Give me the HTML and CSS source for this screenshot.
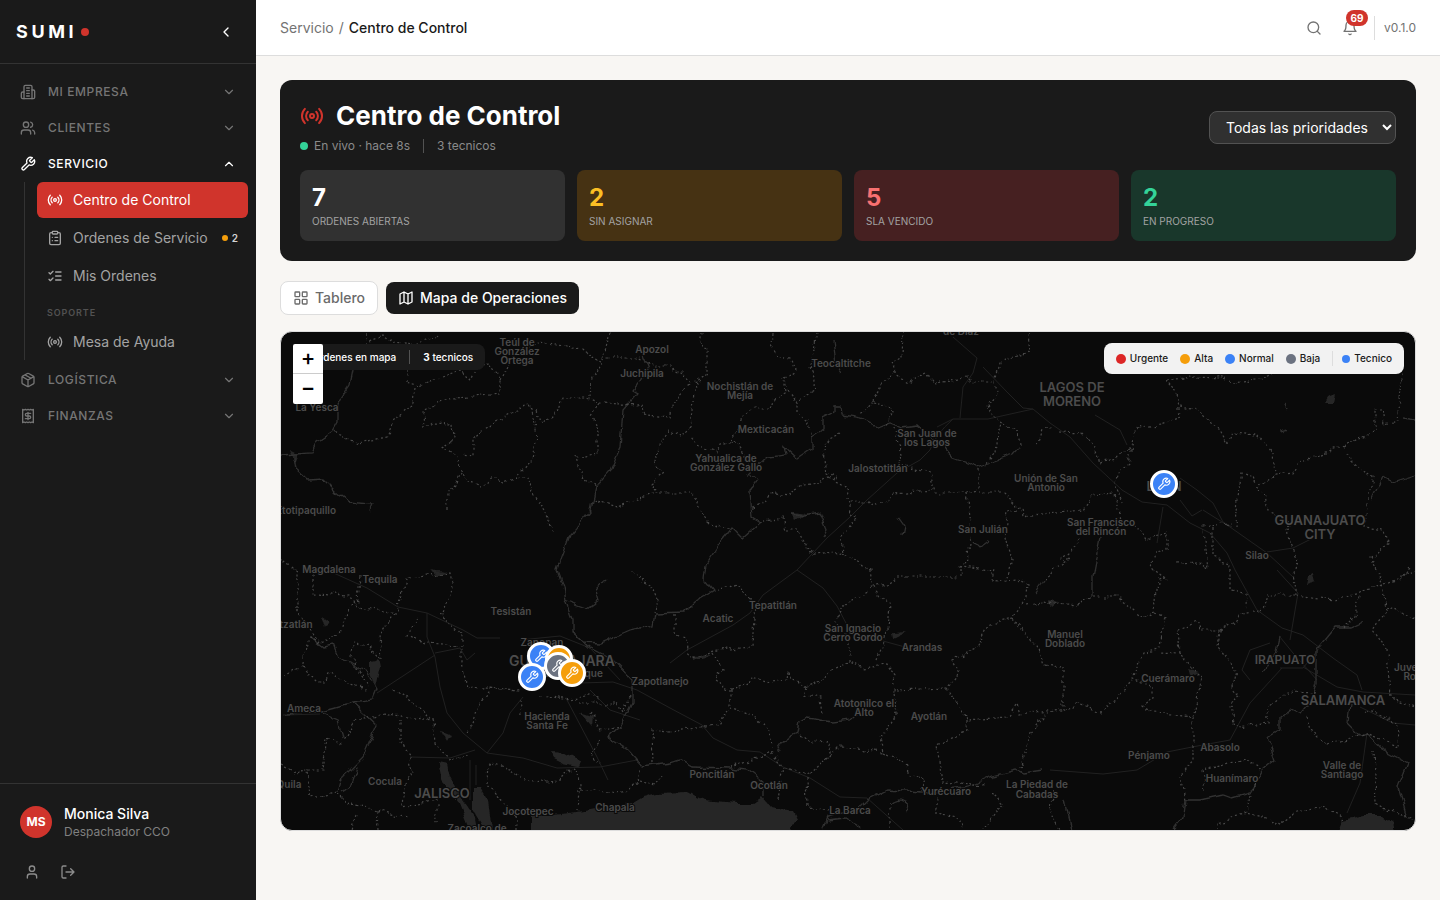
FILE: index.html
```html
<!DOCTYPE html>
<html lang="es">
<head>
  <meta charset="UTF-8" />
  <meta name="viewport" content="width=device-width, initial-scale=1.0"/>
  <title>Centro de Control</title>
  <link rel="stylesheet" href="styles.css">
</head>
<body>
  <!-- icon sprite -->
  <svg class="sprite" aria-hidden="true">
    <symbol id="i-building" viewBox="0 0 24 24"><path d="M6 22V4a2 2 0 0 1 2-2h8a2 2 0 0 1 2 2v18Z"/><path d="M6 12H4a2 2 0 0 0-2 2v6a2 2 0 0 0 2 2h2M18 9h2a2 2 0 0 1 2 2v9a2 2 0 0 1-2 2h-2M10 6h4M10 10h4M10 14h4M10 18h4"/></symbol>
    <symbol id="i-users" viewBox="0 0 24 24"><path d="M16 21v-2a4 4 0 0 0-4-4H6a4 4 0 0 0-4 4v2"/><circle cx="9" cy="7" r="4"/><path d="M22 21v-2a4 4 0 0 0-3-3.87M16 3.13a4 4 0 0 1 0 7.75"/></symbol>
    <symbol id="i-wrench" viewBox="0 0 24 24"><path d="M14.7 6.3a1 1 0 0 0 0 1.4l1.6 1.6a1 1 0 0 0 1.4 0l3.77-3.77a6 6 0 0 1-7.94 7.94l-6.91 6.91a2.12 2.12 0 0 1-3-3l6.91-6.91a6 6 0 0 1 7.94-7.94l-3.76 3.76z"/></symbol>
    <symbol id="i-radio" viewBox="0 0 24 24"><path d="M4.9 19.1C1 15.2 1 8.8 4.9 4.9M7.8 16.2c-2.3-2.3-2.3-6.1 0-8.5"/><circle cx="12" cy="12" r="2"/><path d="M16.2 7.8c2.3 2.3 2.3 6.1 0 8.5M19.1 4.9C23 8.8 23 15.1 19.1 19"/></symbol>
    <symbol id="i-clipboard" viewBox="0 0 24 24"><rect x="8" y="2" width="8" height="4" rx="1"/><path d="M16 4h2a2 2 0 0 1 2 2v14a2 2 0 0 1-2 2H6a2 2 0 0 1-2-2V6a2 2 0 0 1 2-2h2M12 11h4M12 16h4M8 11h.01M8 16h.01"/></symbol>
    <symbol id="i-checks" viewBox="0 0 24 24"><path d="m3 17 2 2 4-4M3 7l2 2 4-4M13 6h8M13 12h8M13 18h8"/></symbol>
    <symbol id="i-package" viewBox="0 0 24 24"><path d="m7.5 4.27 9 5.15M21 8a2 2 0 0 0-1-1.73l-7-4a2 2 0 0 0-2 0l-7 4A2 2 0 0 0 3 8v8a2 2 0 0 0 1 1.73l7 4a2 2 0 0 0 2 0l7-4A2 2 0 0 0 21 16ZM3.3 7l8.7 5 8.7-5M12 22V12"/></symbol>
    <symbol id="i-receipt" viewBox="0 0 24 24"><path d="M4 2v20l2-1 2 1 2-1 2 1 2-1 2 1 2-1 2 1V2l-2 1-2-1-2 1-2-1-2 1-2-1-2 1Z"/><path d="M16 8h-6a2 2 0 1 0 0 4h4a2 2 0 1 1 0 4H8M12 17.5v-11"/></symbol>
    <symbol id="i-down" viewBox="0 0 24 24"><path d="m6 9 6 6 6-6"/></symbol>
    <symbol id="i-up" viewBox="0 0 24 24"><path d="m18 15-6-6-6 6"/></symbol>
    <symbol id="i-left" viewBox="0 0 24 24"><path d="m15 18-6-6 6-6"/></symbol>
    <symbol id="i-user" viewBox="0 0 24 24"><path d="M19 21v-2a4 4 0 0 0-4-4H9a4 4 0 0 0-4 4v2"/><circle cx="12" cy="7" r="4"/></symbol>
    <symbol id="i-logout" viewBox="0 0 24 24"><path d="M9 21H5a2 2 0 0 1-2-2V5a2 2 0 0 1 2-2h4M16 17l5-5-5-5M21 12H9"/></symbol>
    <symbol id="i-search" viewBox="0 0 24 24"><circle cx="11" cy="11" r="8"/><path d="m21 21-4.3-4.3"/></symbol>
    <symbol id="i-bell" viewBox="0 0 24 24"><path d="M6 8a6 6 0 0 1 12 0c0 7 3 9 3 9H3s3-2 3-9M10.3 21a1.94 1.94 0 0 0 3.4 0"/></symbol>
    <symbol id="i-grid" viewBox="0 0 24 24"><rect x="3" y="3" width="7" height="7" rx="1"/><rect x="14" y="3" width="7" height="7" rx="1"/><rect x="14" y="14" width="7" height="7" rx="1"/><rect x="3" y="14" width="7" height="7" rx="1"/></symbol>
    <symbol id="i-map" viewBox="0 0 24 24"><path d="m3 6 6-3 6 3 6-3v15l-6 3-6-3-6 3ZM9 3v15M15 6v15"/></symbol>
  </svg>

  <div class="app">
    <aside class="sidebar">
      <div class="brand">
        <a href="#" class="logo">SUMI</a>
        <span class="logo-dot"></span>
        <button class="collapse" aria-label="Contraer menú"><svg class="icon"><use href="#i-left"/></svg></button>
      </div>

      <nav class="nav">
        <button class="nav-group"><svg class="icon"><use href="#i-building"/></svg><span>Mi empresa</span><svg class="icon chevron"><use href="#i-down"/></svg></button>
        <button class="nav-group"><svg class="icon"><use href="#i-users"/></svg><span>Clientes</span><svg class="icon chevron"><use href="#i-down"/></svg></button>
        <button class="nav-group open"><svg class="icon"><use href="#i-wrench"/></svg><span>Servicio</span><svg class="icon chevron"><use href="#i-up"/></svg></button>
        <div class="subnav">
          <a href="#" class="nav-item active"><svg class="icon"><use href="#i-radio"/></svg>Centro de Control</a>
          <a href="#" class="nav-item"><svg class="icon"><use href="#i-clipboard"/></svg>Ordenes de Servicio<span class="nav-count">2</span></a>
          <a href="#" class="nav-item"><svg class="icon"><use href="#i-checks"/></svg>Mis Ordenes</a>
          <div class="nav-label">Soporte</div>
          <a href="#" class="nav-item"><svg class="icon"><use href="#i-radio"/></svg>Mesa de Ayuda</a>
        </div>
        <button class="nav-group"><svg class="icon"><use href="#i-package"/></svg><span>Logística</span><svg class="icon chevron"><use href="#i-down"/></svg></button>
        <button class="nav-group"><svg class="icon"><use href="#i-receipt"/></svg><span>Finanzas</span><svg class="icon chevron"><use href="#i-down"/></svg></button>
      </nav>

      <div class="account">
        <div class="account-user">
          <div class="avatar">MS</div>
          <div>
            <div class="account-name">Monica Silva</div>
            <div class="account-role">Despachador CCO</div>
          </div>
        </div>
        <div class="account-actions">
          <button aria-label="Perfil"><svg class="icon"><use href="#i-user"/></svg></button>
          <button aria-label="Cerrar sesión"><svg class="icon"><use href="#i-logout"/></svg></button>
        </div>
      </div>
    </aside>

    <div class="main">
      <header class="topbar">
        <div class="breadcrumb"><a href="#">Servicio</a><span>/</span><strong>Centro de Control</strong></div>
        <div class="topbar-actions">
          <button aria-label="Buscar"><svg class="icon"><use href="#i-search"/></svg></button>
          <button aria-label="Notificaciones"><svg class="icon"><use href="#i-bell"/></svg><span class="badge">69</span></button>
          <span class="version">v0.1.0</span>
        </div>
      </header>

      <main class="content">
        <section class="hero">
          <div class="hero-head">
            <div>
              <div class="hero-title"><svg class="icon"><use href="#i-radio"/></svg><h1>Centro de Control</h1></div>
              <div class="hero-status"><span class="live">En vivo · hace 8s</span><span class="divider"></span><span>3 tecnicos</span></div>
            </div>
            <select class="priority" aria-label="Prioridad">
              <option>Todas las prioridades</option>
              <option>Urgente</option>
              <option>Alta</option>
              <option>Normal</option>
              <option>Baja</option>
            </select>
          </div>
          <div class="stats">
            <div class="stat"><div class="stat-value">7</div><div class="stat-label">Ordenes abiertas</div></div>
            <div class="stat amber"><div class="stat-value">2</div><div class="stat-label">Sin asignar</div></div>
            <div class="stat red"><div class="stat-value">5</div><div class="stat-label">SLA vencido</div></div>
            <div class="stat green"><div class="stat-value">2</div><div class="stat-label">En progreso</div></div>
          </div>
        </section>

        <div class="tabs">
          <button class="tab"><svg class="icon"><use href="#i-grid"/></svg>Tablero</button>
          <button class="tab selected"><svg class="icon"><use href="#i-map"/></svg>Mapa de Operaciones</button>
        </div>

        <section class="map">
          <svg class="map-canvas" viewBox="281 332 1134 498" preserveAspectRatio="xMinYMin slice">
            <defs>
              <filter id="rough" filterUnits="userSpaceOnUse" x="271" y="322" width="1154" height="518">
                <feTurbulence type="fractalNoise" baseFrequency="0.1" numOctaves="1" seed="4"/>
                <feDisplacementMap in="SourceGraphic" scale="9" xChannelSelector="R" yChannelSelector="G"/>
              </filter>
            </defs>

            <!-- lakes -->
            <g class="water" filter="url(#rough)">
              <path d="M531 835V817L577 811 633 803 643 797 657 793 688 792 703 800 737 803 753 803 762 797 770 807 793 812 797 820 787 835Z"/>
              <path d="M438 763 447 765 450 777 463 800 475 817 477 832 470 828 460 803 443 783ZM473 787 480 787 488 800 492 832 483 827 473 810Z"/>
              <path d="M550 752 565 753 582 762 580 767 563 763 553 758ZM370 660 378 658 380 667 375 687 370 673ZM321 616 329 622 325 629ZM441 730 451 734 447 741ZM580 713 592 717 591 725Z"/>
              <path d="M1338 835 1343 820 1363 815 1383 815 1393 823 1396 835ZM1328 397 1336 394 1334 402 1325 402ZM1308 575 1314 572 1316 582 1306 585ZM892 632 907 631 893 638ZM694 655 712 654 695 660ZM1188 669 1198 672 1190 676ZM1049 600 1058 602 1052 607ZM430 569 446 571 440 575ZM290 450 298 454 294 463ZM792 511 806 513 796 520Z"/>
            </g>

            <!-- highways -->
            <g class="road">
              <path d="M953 337 977 358 973 373 963 387 960 418M983 367 1007 392 1023 408 1033 409 1050 423 1070 437 1093 463 1122 490 1142 502 1167 505 1190 523 1210 533 1227 553 1235 570 1257 610 1282 628 1303 635 1333 658 1357 675 1362 690"/>
              <path d="M937 427 953 419 988 419 1033 409M953 419Q935 435 930 450L920 460 897 473 867 500 850 517 827 538 797 570 763 595 750 613 733 625 687 650 670 663"/>
              <path d="M1180 478 1197 490 1213 503 1223 522 1232 527M1203 510 1230 527 1267 553 1293 577M1267 552 1293 548 1313 538M1163 507 1157 543M1180 500 1192 516 1202 510M1095 415 1120 430 1127 445"/>
              <path d="M327 570 367 588 398 607 427 613 463 630 477 638 500 638M427 613 427 637 435 657 440 687 447 713 463 733 487 753 523 758 557 768 600 767 637 760M435 655 377 693M435 653 460 648 467 660 475 653M487 753 503 733 510 713 523 697M283 715 320 714M410 757 450 758 475 750M470 760V800M476 765V785"/>
              <path d="M580 683 613 682 637 690 670 708 702 725 713 738 737 750 760 752 783 767 810 778 840 797 867 798 903 830M567 700 597 757 608 780M520 640 560 636 590 648 620 680M590 690 610 710 640 720M797 570 823 588 837 606 847 625M883 641 905 647"/>
              <path d="M1277 570 1298 593 1290 640M1282 668 1250 703 1230 740 1192 747 1167 752 1137 770 1103 774 1050 770M1303 667 1337 687 1363 692 1415 695M1360 707 1393 723 1415 725M1280 637 1293 653 1317 680M1367 733 1360 783 1347 813M1270 643 1250 650 1242 670 1250 680M1280 668 1303 668 1318 650"/>
            </g>

            <!-- rivers -->
            <g class="river" filter="url(#rough)">
              <path d="M353 370 350 385 338 403 338 423 333 432 317 443 312 453 281 455M293 457 295 468 308 480 323 479 337 493 350 503 372 505 370 510"/>
              <path d="M642 353 648 370 633 390 638 393 623 410 620 447 610 470 595 487 590 510 570 535 557 570 563 587 565 600 572 620 572 633 590 648 613 660 632 680 632 703 620 727 608 738 628 750 643 767 670 763 680 760 692 767 730 768 747 770 763 783 763 797"/>
              <path d="M1020 447 1013 455 983 465 977 467 953 458 943 447 917 425 903 427 890 422 877 427 860 418 843 415 842 407 833 407 833 413 823 418 823 430 812 437 812 448 797 458 785 447 787 455 767 457 750 473 758 480 750 490 752 517 760 522 742 538 732 528 720 543 707 563 705 580 713 590 697 600 685 612 655 613 653 625 630 630 600 643 583 642 572 632"/>
              <path d="M832 340 835 363 842 373M565 600 587 608 598 600 595 590 608 578M792 512 803 515 820 512 827 530 823 537M898 517 905 527 903 537M973 540 980 547 988 541"/>
              <path d="M310 637 323 647 333 645 338 657 350 662 367 673 377 690 373 700 353 703 320 712 283 713M353 703 363 712 377 725 363 757 340 780 337 792M357 767 350 787 342 792M320 712 338 720 342 740"/>
              <path d="M777 752 785 740 798 733 800 722 807 718 833 722 850 720 857 713M823 830 828 817 857 810 867 800 887 790 923 792 963 787 977 783 990 777 1017 770 1023 773 1043 770M892 803 900 800 909 804 905 813M828 820 845 818 862 828"/>
              <path d="M1173 830 1183 817 1185 800 1200 800 1223 795 1232 798 1250 793 1263 770 1275 760 1267 737 1280 730 1280 717 1290 710 1300 715 1310 703 1317 683 1317 650 1335 628 1352 628 1365 622M1350 703 1348 723 1360 735 1367 733 1383 750 1408 763 1398 787 1407 817 1415 820"/>
              <path d="M1372 500 1383 477 1393 482 1415 475M1100 537 1092 577V597M1065 800 1072 830M1280 430 1287 428M1285 405 1287 409M1404 418 1415 420M1043 580 1035 592M1420 660 1415 665M1280 637 1277 650 1263 670"/>
            </g>

            <!-- municipal borders -->
            <g class="border" filter="url(#rough)">
              <path d="M367 332 366 342 383 336 393 342 415 344 440 335M407 370 407 382 420 386 447 375 460 370 470 380 477 367 488 363 500 380 500 394 473 397 452 398 437 403 423 412 424 427 433 422 452 423 453 440 443 448 457 457 462 470 467 482 480 487 493 478 503 483 515 477 528 477 532 492 545 510 552 530"/>
              <path d="M515 477 527 463 533 460 537 437 533 410 528 405 510 413 487 428 473 437 473 455 463 453M537 410 542 425 557 413 562 398 587 398 600 403 592 417 598 433 598 452 577 457 582 478 595 487"/>
              <path d="M500 380 510 360 537 343 582 348 593 358 603 363 592 377 590 397M603 360 610 332M603 358 637 358 653 367 670 367 683 373 690 385 673 403 670 417 645 415 640 405 600 403M690 427 680 437 668 430 658 447 655 463 662 473 650 483 657 493 690 493 698 502 700 513 710 523 730 528M593 500 617 507 637 500 657 493"/>
              <path d="M415 388 413 403 393 422 387 437 357 443 333 432M447 510 447 493 463 472M702 332 700 343 707 348 707 373 695 383 690 427M773 332 772 345 777 355 790 358 795 370 783 380 785 393 773 400 770 408 753 408 742 418 735 433 732 442 720 445 717 452 697 445 690 437"/>
              <path d="M818 332 815 350 810 367 815 380 813 392 797 402 787 390 783 378M797 402 797 413 808 420 812 437M735 440 745 455 748 475M903 333 902 357 892 363 895 373 907 382 927 373 933 382 967 378 973 382 995 382 1000 363 1010 358 1030 352 1028 333M893 375 883 383 872 402 890 405 892 412 885 427M872 402 860 415"/>
              <path d="M995 382 997 393 988 405 992 418 1003 423 997 433 995 453 985 465M1038 445 1043 430 1053 427M1020 445 1018 433 1003 422M893 427 897 443 903 453 898 465 930 473 935 493 967 493 978 490 978 467M840 433 823 443 827 473 837 480"/>
              <path d="M752 507 763 503 773 493 787 495 803 485 817 483 828 477 847 487 850 515 857 520 840 537 843 552 813 555 803 540 797 530 785 530 782 518 760 522M850 502 867 502 873 507 890 500 893 493 933 490M980 492 1003 492 1020 508 1023 517 1083 510 1093 495 1115 493 1120 520 1143 532 1147 540 1168 533 1168 550 1155 552 1152 568 1167 580"/>
              <path d="M967 493 972 530 967 560 960 567 990 570 993 578M1018 510 1007 512 1005 533 1012 560 1005 580M1070 558 1057 567 1043 580M843 552 868 568 870 570 873 587 890 583 897 577 963 577 960 567"/>
              <path d="M1167 380 1177 393 1180 417 1160 425 1138 427 1132 447 1128 463 1118 473 1115 483 1122 503M1167 380 1193 377 1223 378 1233 383 1257 380 1273 373M1180 407 1197 410 1220 430 1227 443 1233 433 1257 435 1273 453 1275 475 1293 473 1300 462 1337 448 1375 432 1375 410 1383 410 1385 423 1397 420 1400 390 1405 373"/>
              <path d="M1273 477 1257 487 1253 477 1242 473 1237 497 1235 527M1257 490 1265 497 1268 510 1287 520 1290 543 1297 557 1293 573 1297 595M1347 452 1353 463 1373 477 1367 503 1365 527 1383 530 1390 543 1370 557 1383 585M1060 432 1083 433 1095 447 1100 463 1120 457 1132 447M1177 563 1200 562 1207 570 1203 527 1230 523M1213 527 1213 557 1230 563V590L1245 592 1247 610M1083 530 1073 550 1060 560M1400 580 1410 568"/>
              <path d="M281 560 297 572 297 610 320 643M313 570 313 593 350 595 357 607 397 613 402 590 408 577 450 573 453 587 440 617 462 633 462 663 467 687 520 690 490 688 477 707 468 733M360 577 358 600 348 610 340 633 320 643 310 637 302 667 283 675M302 667 317 682 325 682 330 673 347 683 367 690"/>
              <path d="M395 613 388 622 380 635 382 660 368 647 353 642 352 657 367 687M417 618 408 635 425 643 460 645M393 690 420 707 433 722 435 743 450 760 470 753M383 713 407 717 433 720M400 720 400 743 410 757 412 773 405 783 403 807 437 800 437 825M383 713 357 720 342 743 327 737 323 770 307 770 310 797 337 793 347 803 377 810 407 818M281 765 295 772 307 770M377 810 378 830M357 815 352 830"/>
              <path d="M487 763 510 770 530 782 560 780 573 767 580 783 577 810M580 790 623 793 638 783 640 770M488 763 487 783 503 803 517 817 517 830M577 703 617 703 623 713 630 697M590 713 600 730 623 727M653 763 652 730 670 732 702 727M630 573 650 583 658 600 653 613M540 695 570 700 590 695 600 700M520 700 522 715M600 740 590 755 600 765M640 780 655 785 662 775"/>
              <path d="M713 592 737 583 748 597 755 603 752 647 718 650 693 657 687 650 685 637 675 633 675 613M713 653 722 670 715 680 730 690 750 685 752 677 770 682 787 680 788 670 792 678 808 687 820 682 833 670 850 662 863 668 887 665 895 677 893 690 947 688 960 673 953 660 977 647 990 623 1013 618 1027 597 1028 583 1017 580 993 582 995 570"/>
              <path d="M850 662 850 643 835 620 843 607 873 587 883 602 890 603 888 630 877 660M730 690 730 708 753 717 770 732 772 748M728 710 718 723 702 727M808 687 805 695 820 698 822 713M893 692 898 713 880 737 883 752 840 747 810 775 783 767M883 752 903 762 910 775 925 777 920 792M800 735 810 742 825 740 832 755 820 765"/>
              <path d="M947 688 958 703 967 720 1007 717 1017 705 1020 715 1047 710 1030 733 1020 767M967 720 967 730 937 745 942 782 987 785M807 777 808 807 830 810M937 793 937 813 957 817 962 830M990 793 1003 803 983 830M730 767 753 760 772 752 783 767 778 800M890 803 890 830M1013 618 1025 635 1040 650 1045 665 1063 667 1063 710M1027 605 1048 602 1077 605"/>
              <path d="M1077 605 1092 597 1117 597 1143 617 1155 612 1158 580 1167 575M1155 613 1165 617 1160 647 1143 653 1133 678 1153 687 1153 697 1143 705 1153 713 1193 717 1202 677 1193 670 1180 653 1160 652M1133 680 1117 697 1100 712 1077 703 1075 708 1047 712M1180 653 1178 630 1197 622 1200 630 1220 630 1218 647 1237 670 1233 687 1240 695 1230 703 1232 723 1240 727 1267 723 1267 707 1287 692 1317 693"/>
              <path d="M1220 630 1247 613 1263 610 1267 595 1297 595 1333 600 1383 585 1415 570M1383 585 1387 607 1415 618M1387 608 1373 630 1387 650 1390 697 1415 707M1360 592 1355 615 1342 628M1193 717 1193 760 1180 777 1185 800M1205 790 1202 770 1247 760 1262 770 1252 790M1250 795 1247 813M1307 717 1310 730 1327 745 1367 733 1397 747 1398 723 1367 710M1373 750 1375 803 1387 810 1413 817M1217 830V823L1247 813 1263 817 1280 825 1297 812 1323 807 1343 820M1055 790 1050 810 1060 830"/>
            </g>

            <!-- place names -->
            <g class="places">
              <text x="517" y="346">Teúl de</text><text x="517" y="355">González</text><text x="517" y="364">Ortega</text>
              <text x="652" y="353">Apozol</text>
              <text x="642" y="377">Juchipila</text>
              <text x="317" y="411">La Yesca</text>
              <text x="961" y="335">de Díaz</text>
              <text x="841" y="367">Teocaltitche</text>
              <text x="740" y="390">Nochistlán de</text><text x="740" y="399">Mejía</text>
              <text x="766" y="433">Mexticacán</text>
              <text x="726" y="462">Yahualica de</text><text x="726" y="471">González Gallo</text>
              <text x="878" y="472">Jalostotitlán</text>
              <text x="927" y="437">San Juan de</text><text x="927" y="446">los Lagos</text>
              <text x="1046" y="482">Unión de San</text><text x="1046" y="491">Antonio</text>
              <text x="983" y="533">San Julián</text>
              <text x="1101" y="526">San Francisco</text><text x="1101" y="535">del Rincón</text>
              <text x="1257" y="559">Silao</text>
              <text x="306" y="514">Etotipaquillo</text>
              <text x="329" y="573">Magdalena</text>
              <text x="380" y="583">Tequila</text>
              <text x="293" y="628">Etzatlán</text>
              <text x="511" y="615">Tesistán</text>
              <text x="542" y="646">Zapopan</text>
              <text x="571" y="677">Tlaquepaque</text>
              <text x="660" y="685">Zapotlanejo</text>
              <text x="304" y="712">Ameca</text>
              <text x="547" y="720">Hacienda</text><text x="547" y="729">Santa Fe</text>
              <text x="385" y="785">Cocula</text>
              <text x="289" y="788">Quila</text>
              <text x="528" y="815">Jocotepec</text>
              <text x="615" y="811">Chapala</text>
              <text x="477" y="832">Zacoalco de</text>
              <text x="718" y="622">Acatic</text>
              <text x="773" y="609">Tepatitlán</text>
              <text x="853" y="632">San Ignacio</text><text x="853" y="641">Cerro Gordo</text>
              <text x="922" y="651">Arandas</text>
              <text x="1065" y="638">Manuel</text><text x="1065" y="647">Doblado</text>
              <text x="864" y="707">Atotonilco el</text><text x="864" y="716">Alto</text>
              <text x="929" y="720">Ayotlán</text>
              <text x="712" y="778">Poncitlán</text>
              <text x="769" y="789">Ocotlán</text>
              <text x="850" y="814">La Barca</text>
              <text x="946" y="795">Yurécuaro</text>
              <text x="1037" y="788">La Piedad de</text><text x="1037" y="798">Cabadas</text>
              <text x="1168" y="682">Cuerámaro</text>
              <text x="1149" y="759">Pénjamo</text>
              <text x="1220" y="751">Abasolo</text>
              <text x="1232" y="782">Huanímaro</text>
              <text x="1342" y="769">Valle de</text><text x="1342" y="778">Santiago</text>
              <text x="1418" y="671">Juventino</text><text x="1418" y="680">Rosas</text>
            </g>
            <g class="places cities">
              <text x="1072" y="392">LAGOS DE</text><text x="1072" y="406">MORENO</text>
              <text x="1164" y="491">LEÓN</text>
              <text x="1320" y="525">GUANAJUATO</text><text x="1320" y="539">CITY</text>
              <text x="442" y="798">JALISCO</text>
              <text x="1343" y="705">SALAMANCA</text>
              <text class="city-large" x="562" y="666">GUADALAJARA</text>
              <text class="city-small" x="1285" y="664">IRAPUATO</text>
            </g>
          </svg>

          <button class="pin normal pin-leon" aria-label="Orden normal"><svg class="icon"><use href="#i-wrench"/></svg></button>
          <button class="pin normal pin-zapopan" aria-label="Orden normal"><svg class="icon"><use href="#i-wrench"/></svg></button>
          <button class="pin alta pin-centro" aria-label="Orden alta"><svg class="icon"><use href="#i-wrench"/></svg></button>
          <button class="pin baja pin-sur" aria-label="Orden baja"><svg class="icon"><use href="#i-wrench"/></svg></button>
          <button class="pin alta pin-oriente" aria-label="Orden alta"><svg class="icon"><use href="#i-wrench"/></svg></button>
          <button class="pin normal pin-poniente" aria-label="Orden normal"><svg class="icon"><use href="#i-wrench"/></svg></button>

          <div class="map-summary"><span><b>7</b> ordenes en mapa</span><span class="divider"></span><span><b>3</b> tecnicos</span></div>
          <div class="zoom">
            <button aria-label="Acercar">+</button>
            <button aria-label="Alejar">−</button>
          </div>
          <div class="legend">
            <span class="urgente">Urgente</span>
            <span class="alta">Alta</span>
            <span class="normal">Normal</span>
            <span class="baja">Baja</span>
            <span class="tecnico">Tecnico</span>
          </div>
        </section>
      </main>
    </div>
  </div>
</body>
</html>
```

FILE: styles.css
```css
* { box-sizing: border-box; }
body { margin: 0; font-family: Inter, "Liberation Sans", sans-serif; font-size: 14px; line-height: 20px; color: #1a1a1a; background: #f8f6f3; }
button, select { font: inherit; color: inherit; }
button { background: none; border: none; padding: 0; cursor: pointer; }
a { color: inherit; text-decoration: none; }

.sprite { position: absolute; width: 0; height: 0; }
.icon { width: 16px; height: 16px; flex: none; display: block; fill: none; stroke: currentColor; stroke-width: 2; stroke-linecap: round; stroke-linejoin: round; }

.app { display: flex; min-height: 100vh; }

/* sidebar */
.sidebar { width: 256px; flex: none; display: flex; flex-direction: column; background: #1a1a1a; color: #a3a3a3; }
.brand { display: flex; align-items: center; height: 64px; padding: 0 22px 0 16px; border-bottom: 1px solid #333; color: #fff; }
.logo { font-size: 18px; font-weight: 700; letter-spacing: 0.2em; }
.logo-dot { width: 8px; height: 8px; margin-left: 4px; border-radius: 50%; background: #d0342c; }
.collapse { margin-left: auto; }

.nav { flex: 1; padding: 10px 8px; }
.nav-group { display: flex; align-items: center; gap: 12px; width: 100%; height: 36px; padding: 0 12px; font-size: 12px; font-weight: 500; letter-spacing: 0.05em; text-transform: uppercase; color: #757575; }
.nav-group.open { color: #fff; }
.chevron { width: 14px; height: 14px; margin-left: auto; }
.subnav { display: flex; flex-direction: column; gap: 2px; margin: 0 0 2px 16px; padding-left: 12px; border-left: 1px solid #333; }
.nav-item { display: flex; align-items: center; gap: 10px; height: 36px; padding: 0 10px; border-radius: 6px; white-space: nowrap; }
.nav-item.active { background: #d0342c; color: #fff; }
.nav-count { display: flex; align-items: center; gap: 4px; margin-left: auto; font-size: 10px; font-weight: 600; color: #d4d4d4; }
.nav-count::before { content: ""; width: 6px; height: 6px; border-radius: 50%; background: #f59e0b; }
.nav-label { height: 26px; padding: 10px 10px 0; font-size: 9px; line-height: 14px; font-weight: 600; letter-spacing: 0.1em; text-transform: uppercase; color: #525252; }

.account { padding: 20px; border-top: 1px solid #333; }
.account-user { display: flex; align-items: center; gap: 12px; }
.avatar { display: flex; align-items: center; justify-content: center; width: 32px; height: 32px; border-radius: 50%; background: #d0342c; color: #fff; font-size: 12px; font-weight: 700; }
.account-name { font-weight: 500; line-height: 20px; color: #fff; }
.account-role { font-size: 12px; line-height: 16px; color: #808080; }
.account-actions { display: flex; gap: 20px; padding: 24px 4px 0; color: #8c8c8c; }

/* top bar */
.main { flex: 1; min-width: 0; }
.topbar { display: flex; align-items: center; justify-content: space-between; height: 56px; padding: 0 24px; background: #fff; border-bottom: 1px solid #ddd; }
.breadcrumb { display: flex; gap: 5px; color: #737373; }
.breadcrumb strong { font-weight: 500; color: #1a1a1a; }
.topbar-actions { display: flex; align-items: center; gap: 20px; color: #737373; }
.topbar-actions button { position: relative; }
.badge { position: absolute; left: 4px; top: -10px; width: 22px; height: 16px; border-radius: 8px; background: #d0342c; color: #fff; font-size: 10px; line-height: 16px; font-weight: 700; text-align: center; }
.version { margin-left: -4px; padding-left: 9px; border-left: 1px solid #ddd; font-size: 12px; line-height: 24px; }

.content { padding: 24px; }

/* dark header card */
.hero { padding: 20px; border-radius: 12px; background: #1a1a1a; color: #fff; }
.hero-head { display: flex; align-items: center; justify-content: space-between; margin-bottom: 16px; }
.hero-title { display: flex; align-items: center; gap: 12px; }
.hero-title .icon { width: 24px; height: 24px; color: #d0342c; }
.hero-title h1 { margin: 0; font-size: 26px; line-height: 32px; font-weight: 700; }
.hero-status { display: flex; align-items: center; gap: 13px; margin-top: 6px; font-size: 12px; line-height: 16px; color: #8a8a8a; }
.live { display: flex; align-items: center; gap: 6px; }
.live::before { content: ""; width: 8px; height: 8px; border-radius: 50%; background: #34d399; }
.divider { width: 1px; height: 14px; background: #525252; }
.priority { height: 33px; padding: 0 11px 0 12px; border: 1px solid #525252; border-radius: 8px; background: #303030; color: #fff; }

.stats { display: grid; grid-template-columns: repeat(4, 1fr); gap: 12px; }
.stat { padding: 12px; border-radius: 8px; background: #313131; }
.stat-value { font-size: 24px; line-height: 32px; font-weight: 700; }
.stat-label { font-size: 10px; line-height: 15px; text-transform: uppercase; color: #a3a3a3; }
.stat.amber { background: #463213; }
.stat.amber .stat-value { color: #fbbf24; }
.stat.red { background: #462021; }
.stat.red .stat-value { color: #f87171; }
.stat.green { background: #19372b; }
.stat.green .stat-value { color: #34d399; }

.tabs { display: flex; align-items: center; gap: 8px; margin: 20px 0 16px; }
.tab { display: flex; align-items: center; gap: 6px; height: 34px; padding: 0 12px; border: 1px solid #ddd; border-radius: 8px; background: #fff; color: #6b6b6b; font-weight: 500; }
.tab.selected { height: 32px; border: none; background: #1a1a1a; color: #fff; }

/* map */
.map { position: relative; height: 500px; overflow: hidden; border: 1px solid #ddd; border-radius: 12px; background: #0a0a0a; }
.map-canvas { display: block; width: 100%; height: 100%; }
.water { fill: #262626; }
.road { fill: none; stroke: #212121; }
.river { fill: none; stroke: #303030; stroke-width: 1.3; }
.border { fill: none; stroke: #484848; stroke-width: 1.2; stroke-dasharray: 2 2.5; }
.places { font-family: Inter, sans-serif; font-size: 10px; font-weight: 600; text-anchor: middle; fill: #4c4c4c; stroke: #0a0a0a; stroke-width: 2; paint-order: stroke; }
.places.cities { font-size: 13px; }
.places .city-large { font-size: 14px; }
.places .city-small { font-size: 12px; }

.pin { position: absolute; display: flex; align-items: center; justify-content: center; width: 28px; height: 28px; border: 3px solid #fff; border-radius: 50%; color: #fff; }
.pin .icon { width: 14px; height: 14px; }
.pin.normal { background: #3b82f6; }
.pin.alta { background: #f59e0b; }
.pin.baja { background: #6b7280; }
.pin-leon { left: 869px; top: 138px; }
.pin-zapopan { left: 246px; top: 310px; }
.pin-centro { left: 264px; top: 313px; }
.pin-sur { left: 263px; top: 320px; }
.pin-oriente { left: 277px; top: 327px; }
.pin-poniente { left: 237px; top: 331px; }

.map-summary { position: absolute; left: 12px; top: 12px; display: flex; align-items: center; gap: 13px; height: 26px; padding: 0 12px; border-radius: 8px; background: #1a1a1a; color: #fff; font-size: 10px; font-weight: 500; }
.zoom { position: absolute; left: 12px; top: 12px; width: 30px; border-radius: 2px; background: #fff; overflow: hidden; }
.zoom button { display: block; width: 30px; height: 30px; color: #000; font-size: 22px; font-weight: 500; line-height: 26px; padding-bottom: 4px; }
.zoom button:first-child { border-bottom: 1px solid #ccc; }
.legend { position: absolute; right: 11px; top: 11px; display: flex; align-items: center; gap: 12px; padding: 8px 12px; border-radius: 8px; background: rgba(255, 255, 255, 0.95); font-size: 10px; line-height: 15px; font-weight: 500; }
.legend span { display: flex; align-items: center; gap: 4px; }
.legend span::before { content: ""; width: 10px; height: 10px; border-radius: 50%; }
.legend .urgente::before { background: #dc2626; }
.legend .alta::before { background: #f59e0b; }
.legend .normal::before { background: #3b82f6; }
.legend .baja::before { background: #6b7280; }
.legend .tecnico { padding-left: 9px; border-left: 1px solid #ddd; }
.legend .tecnico::before { width: 8px; height: 8px; background: #3b82f6; }
```
